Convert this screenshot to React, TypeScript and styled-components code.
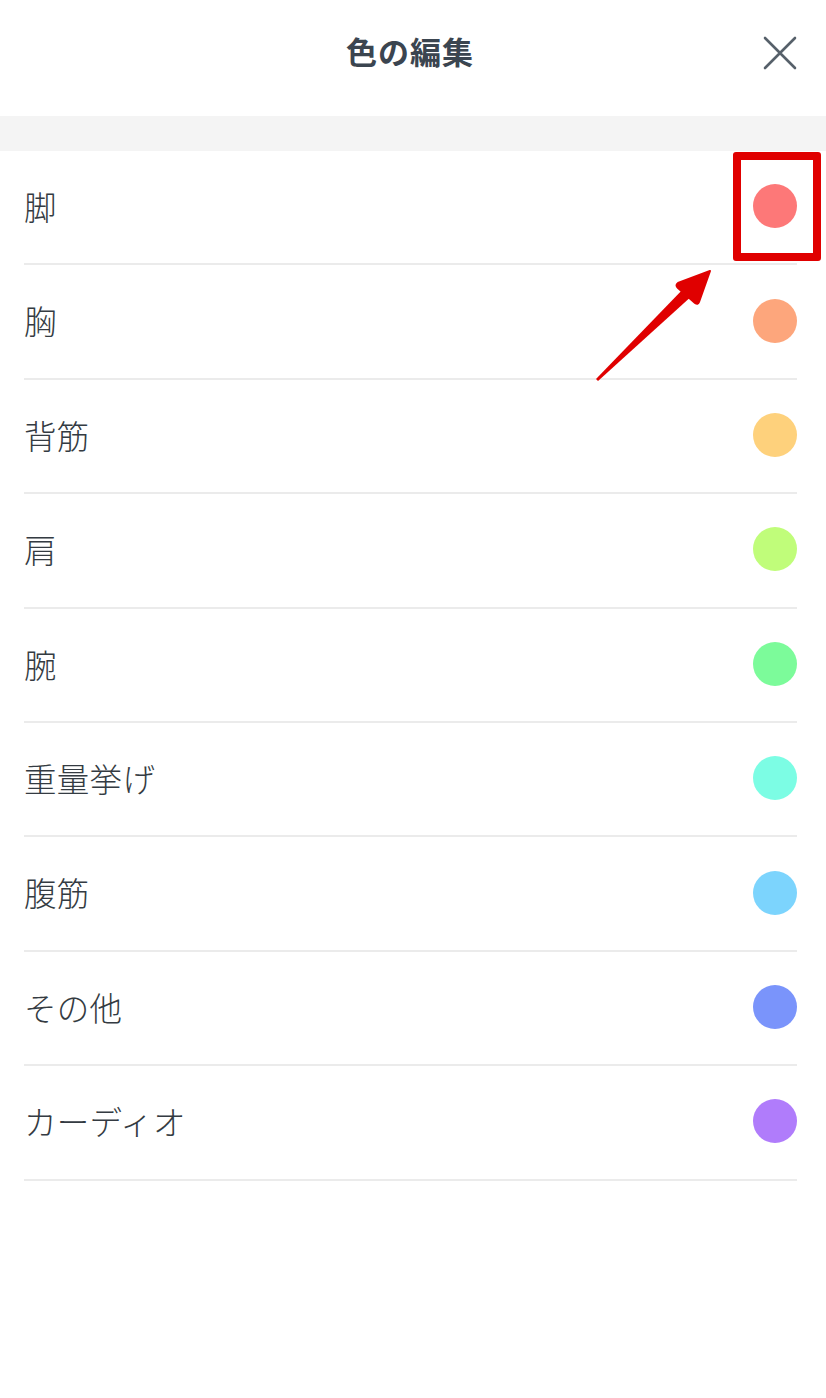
import React from "react";
import styled, { createGlobalStyle } from "styled-components";

const GlobalStyle = createGlobalStyle`
  html, body { margin: 0; padding: 0; background: #ffffff; }
  body { font-family: "Noto Sans CJK JP", "Noto Sans", sans-serif; }
`;

const Page = styled.div`
  position: relative;
  width: 826px;
  height: 1398px;
  background: #ffffff;
  overflow: hidden;
`;

const Header = styled.header`
  height: 116px;
  display: flex;
  align-items: center;
  justify-content: center;
  position: relative;
`;

const Title = styled.h1`
  margin: 0;
  font-size: 31px;
  font-weight: 700;
  color: #3b4550;
  letter-spacing: 1px;
  transform: translate(-3px, -8px);
`;

const CloseButton = styled.button`
  position: absolute;
  right: 26px;
  top: 33px;
  width: 40px;
  height: 40px;
  border: none;
  background: transparent;
  padding: 0;
  display: flex;
  align-items: center;
  justify-content: center;
`;

const Band = styled.div`
  height: 35px;
  background: #f4f4f4;
`;

const List = styled.ul`
  list-style: none;
  margin: 0 29px 0 24px;
  padding: 0;
`;

const Row = styled.li`
  height: 114.4px;
  box-sizing: border-box;
  border-bottom: 2px solid #ebebeb;
  display: flex;
  align-items: center;
  justify-content: space-between;
  padding-bottom: 2px;
`;

const Label = styled.span`
  font-size: 32.5px;
  font-weight: 300;
  color: #343b42;
  line-height: 1;
  letter-spacing: 0.3px;
`;

const Dot = styled.span<{ $color: string }>`
  width: 44px;
  height: 44px;
  border-radius: 50%;
  background: ${(p) => p.$color};
`;

const HighlightBox = styled.div`
  position: absolute;
  left: 733px;
  top: 152px;
  width: 88px;
  height: 109px;
  box-sizing: border-box;
  border: 8px solid #e00000;
  border-radius: 3px;
  pointer-events: none;
`;

const ArrowOverlay = styled.svg`
  position: absolute;
  left: 0;
  top: 0;
  pointer-events: none;
`;

const items: { label: string; color: string }[] = [
  { label: "脚", color: "#fd7878" },
  { label: "胸", color: "#fda67c" },
  { label: "背筋", color: "#fed17c" },
  { label: "肩", color: "#c0fd7a" },
  { label: "腕", color: "#7cfb9a" },
  { label: "重量挙げ", color: "#7cfde4" },
  { label: "腹筋", color: "#7cd4fd" },
  { label: "その他", color: "#7a94fb" },
  { label: "カーディオ", color: "#b07cfb" },
];

export default function App() {
  return (
    <Page>
      <GlobalStyle />
      <Header>
        <Title>色の編集</Title>
        <CloseButton aria-label="閉じる">
          <svg width="36" height="36" viewBox="0 0 36 36">
            <path d="M3 3 L33 33 M33 3 L3 33" stroke="#56606a" strokeWidth="2.6" strokeLinecap="round" fill="none" />
          </svg>
        </CloseButton>
      </Header>
      <Band />
      <List>
        {items.map((it) => (
          <Row key={it.label}>
            <Label>{it.label}</Label>
            <Dot $color={it.color} />
          </Row>
        ))}
      </List>
      <HighlightBox />
      <ArrowOverlay width="826" height="1398" viewBox="0 0 826 1398">
        <polygon points="598,381 596,379 686,286 694,294" fill="#e00000" />
        <path d="M710,271 L678,283 Q675,285 678,288 L695,303 Q698,305 699,302 Z" fill="#e00000" stroke="#e00000" strokeWidth="2" strokeLinejoin="round" />
      </ArrowOverlay>
    </Page>
  );
}
